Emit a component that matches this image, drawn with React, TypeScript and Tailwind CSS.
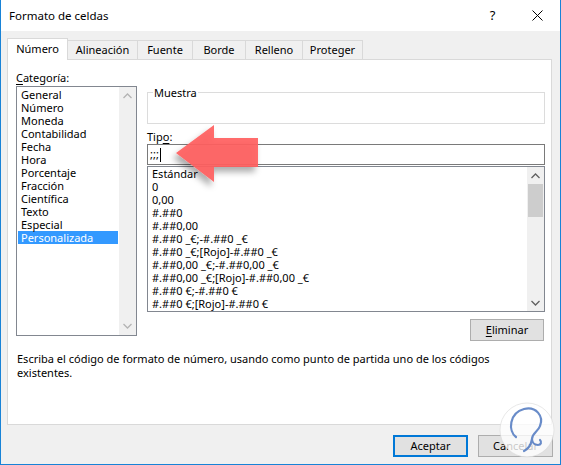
import React from "react";

const FONT = "font-['Noto_Sans','Liberation_Sans',Arial,sans-serif]";

function Chevron({ dir, color }: { dir: "up" | "down"; color: string }) {
  return (
    <svg width="9" height="6" viewBox="0 0 9 6" className="block">
      {dir === "up" ? (
        <polyline points="0.5,5 4.5,1 8.5,5" fill="none" stroke={color} strokeWidth="1.3" />
      ) : (
        <polyline points="0.5,1 4.5,5 8.5,1" fill="none" stroke={color} strokeWidth="1.3" />
      )}
    </svg>
  );
}

const categories = [
  "General",
  "Número",
  "Moneda",
  "Contabilidad",
  "Fecha",
  "Hora",
  "Porcentaje",
  "Fracción",
  "Científica",
  "Texto",
  "Especial",
  "Personalizada",
];

const formats = [
  "Estándar",
  "0",
  "0,00",
  "#.##0",
  "#.##0,00",
  "#.##0 _€;-#.##0 _€",
  "#.##0 _€;[Rojo]-#.##0 _€",
  "#.##0,00 _€;-#.##0,00 _€",
  "#.##0,00 _€;[Rojo]-#.##0,00 _€",
  "#.##0 €;-#.##0 €",
  "#.##0 €;[Rojo]-#.##0 €",
];

const tabs = [
  { label: "Número", w: "w-[61px]" },
  { label: "Alineación", w: "w-[71px]" },
  { label: "Fuente", w: "w-[56px]" },
  { label: "Borde", w: "w-[54px]" },
  { label: "Relleno", w: "w-[58px]" },
  { label: "Proteger", w: "w-[61px]" },
];

export default function App() {
  return (
    <div
      className={`${FONT} relative w-[561px] h-[465px] bg-[#f0f0f0] border-x border-b border-[#1883d7] flex flex-col text-[11px] text-black overflow-hidden`}
    >
      {/* Title bar */}
      <div className="h-[31px] bg-white flex items-center shrink-0">
        <div className="pl-[8px] flex-1 text-[11.5px]">Formato de celdas</div>
        <div className="w-[45px] h-full flex items-center justify-center text-[13px]">?</div>
        <div className="w-[45px] h-full flex items-center justify-center">
          <svg width="11" height="11" viewBox="0 0 11 11">
            <line x1="0.5" y1="0.5" x2="10.5" y2="10.5" stroke="#000" strokeWidth="1" />
            <line x1="10.5" y1="0.5" x2="0.5" y2="10.5" stroke="#000" strokeWidth="1" />
          </svg>
        </div>
      </div>

      {/* Tabs */}
      <div className="h-[28px] flex items-end pl-[6px] shrink-0">
        {tabs.map((t, i) =>
          i === 0 ? (
            <div
              key={t.label}
              className={`${t.w} h-[22px] mb-[-1px] relative z-10 bg-white border-x border-t border-[#d9d9d9] flex items-center justify-center pb-[1px]`}
            >
              {t.label}
            </div>
          ) : (
            <div
              key={t.label}
              className={`${t.w} h-[19px] -ml-px border border-b-0 border-[#d9d9d9] bg-[#f0f0f0] flex items-center justify-center`}
            >
              {t.label}
            </div>
          )
        )}
      </div>

      {/* Panel */}
      <div className="ml-[6px] w-[545px] h-[366px] bg-white border border-[#d9d9d9] flex flex-col shrink-0">
        <div className="flex items-start pl-[8px]">
          {/* Left column */}
          <div className="w-[121px] pt-[10px] flex flex-col">
            <div className="h-[15px] leading-[15px]">
              <span className="underline underline-offset-[2px]">C</span>ategoría:
            </div>
            <div className="mt-[1px] h-[250px] border border-[#828790] flex">
              <div className="flex-1 pt-[1px] pl-[1px] pr-[1px]">
                {categories.map((c) => (
                  <div
                    key={c}
                    className={`h-[13px] leading-[13px] pl-[3px] whitespace-nowrap ${
                      c === "Personalizada" ? "bg-[#3399ff] text-white" : ""
                    }`}
                  >
                    {c}
                  </div>
                ))}
              </div>
              <div className="w-[17px] bg-[#f0f0f0] flex flex-col justify-between items-center py-[6px]">
                <Chevron dir="up" color="#b4b4b4" />
                <Chevron dir="down" color="#b4b4b4" />
              </div>
            </div>
          </div>

          {/* Right column */}
          <div className="ml-[10px] w-[398px] pt-[32px] flex flex-col">
            <div className="relative h-[32px] border border-[#dcdcdc]">
              <span className="absolute -top-[8px] left-[5px] bg-white px-[1px] leading-[15px]">Muestra</span>
            </div>
            <div className="mt-[5px] h-[15px] leading-[15px]">
              Tip<span className="underline underline-offset-[2px]">o</span>:
            </div>
            <div className="h-[21px] border border-[#7a7a7a] flex items-center pl-[2px]">
              <span>;;;</span>
              <span className="inline-block w-px h-[14px] bg-black ml-[1px]" />
            </div>
            <div className="mt-[1px] h-[146px] border border-[#828790] flex">
              <div className="flex-1 pl-[4px] pt-[0px]">
                {formats.map((f) => (
                  <div key={f} className="h-[13px] leading-[13px] whitespace-nowrap">
                    {f}
                  </div>
                ))}
              </div>
              <div className="w-[17px] bg-[#f0f0f0] flex flex-col items-center">
                <div className="h-[17px] flex items-center justify-center">
                  <Chevron dir="up" color="#606060" />
                </div>
                <div className="w-[15px] h-[33px] bg-[#cdcdcd]" />
                <div className="flex-1" />
                <div className="h-[17px] flex items-center justify-center">
                  <Chevron dir="down" color="#606060" />
                </div>
              </div>
            </div>
            <div className="self-end mr-[1px] mt-[7px] w-[74px] h-[22px] bg-[#e1e1e1] border border-[#adadad] flex items-center justify-center">
              <span>
                <span className="underline underline-offset-[2px]">E</span>liminar
              </span>
            </div>
          </div>
        </div>

        <div className="mt-[11px] pl-[9px] leading-[14px]">
          Escriba el código de formato de número, usando como punto de partida uno de los códigos
          <br />
          existentes.
        </div>
      </div>

      {/* Buttons */}
      <div className="mt-[10px] flex justify-end gap-[10px] pr-[7px]">
        <div className="w-[75px] h-[22px] bg-[#e1e1e1] border-2 border-[#0078d7] flex items-center justify-center">
          Aceptar
        </div>
        <div className="w-[75px] h-[22px] bg-[#e1e1e1] border border-[#adadad] flex items-center justify-center">
          Cancelar
        </div>
      </div>

      {/* Red arrow annotation */}
      <svg className="absolute left-0 top-0 pointer-events-none" width="561" height="465">
        <defs>
          <filter id="sh" x="-50%" y="-50%" width="200%" height="200%">
            <feDropShadow dx="-3" dy="5" stdDeviation="3" floodColor="#000" floodOpacity="0.35" />
          </filter>
        </defs>
        <polygon
          points="175,153 213,125 213,138 257,138 257,167 213,167 213,182"
          fill="#ff5f5f"
          fillOpacity="0.92"
          filter="url(#sh)"
        />
      </svg>

      {/* Watermark logo */}
      <svg className="absolute left-[497px] top-[401px] pointer-events-none" width="58" height="58" viewBox="0 0 58 58">
        <circle cx="29" cy="29" r="27" fill="#ffffff" fillOpacity="0.78" stroke="#d8d8d8" strokeOpacity="0.6" />
        <path
          d="M18 36 C10 30 11 12 26 8 C38 5 46 15 42 25 C40 31 34 32 34 38 C34 42 37 44 40 44 C43 44 44 41 42 39 M34 38 C33 44 30 48 26 50"
          fill="none"
          stroke="#4f78bf"
          strokeWidth="2.2"
          strokeLinecap="round"
          strokeOpacity="0.85"
        />
      </svg>
    </div>
  );
}
